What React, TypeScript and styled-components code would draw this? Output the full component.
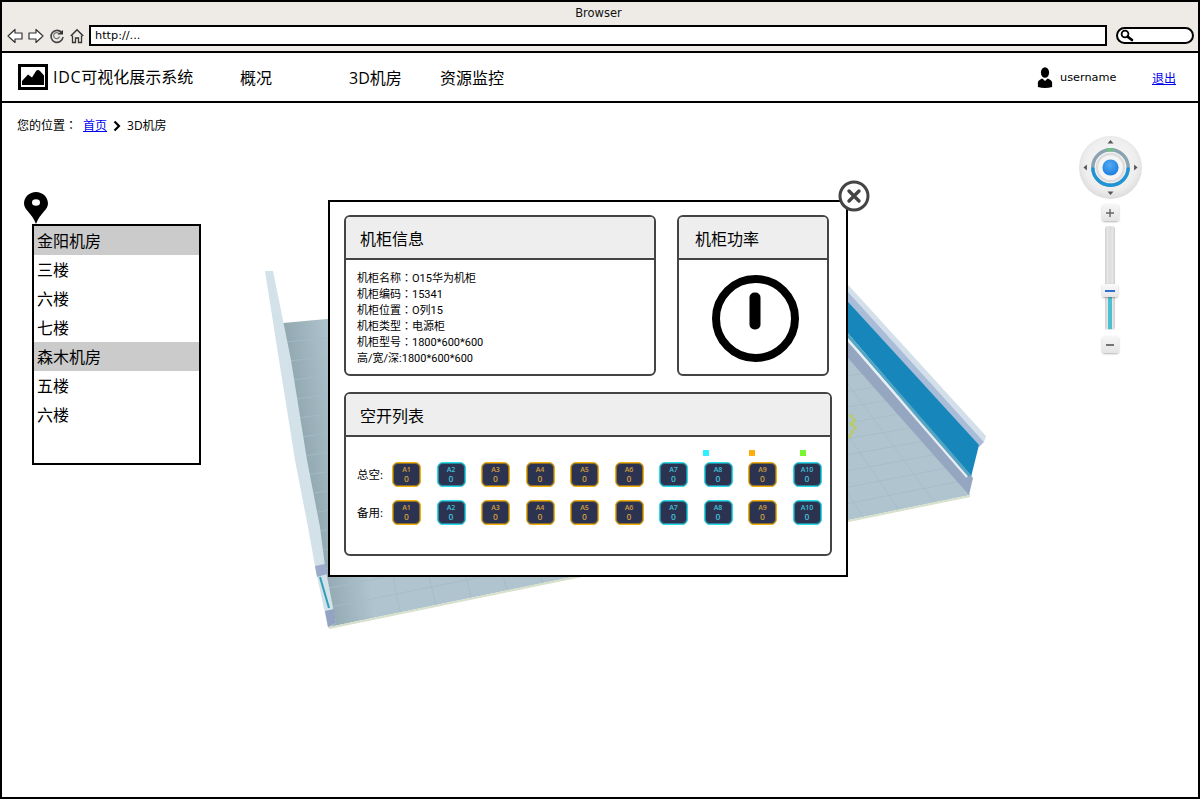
import * as React from 'react';
import styled, { createGlobalStyle } from 'styled-components';

const SANS = '"Open Sans", "Noto Sans CJK SC", sans-serif';
const DEJAVU = '"DejaVu Sans", "Noto Sans CJK SC", sans-serif';

const GlobalStyle = createGlobalStyle`
  html, body {
    margin: 0;
    padding: 0;
    background: #fff;
  }
  body {
    font-family: ${SANS};
    color: #000;
    overflow: hidden;
  }
  * {
    box-sizing: border-box;
  }
`;

const Frame = styled.div`
  width: 1200px;
  height: 799px;
  border: 2px solid #000;
  display: flex;
  flex-direction: column;
  overflow: hidden;
`;

const Chrome = styled.div`
  height: 51px;
  flex: none;
  background: #eeebe6;
  border-bottom: 2px solid #000;
  display: flex;
  flex-direction: column;
`;

const WindowTitle = styled.div`
  height: 22px;
  padding: 3px 3px 0 0;
  text-align: center;
  font: 11.5px/16px ${DEJAVU};
  color: #111;
`;

const ToolRow = styled.div`
  display: flex;
  align-items: center;
  height: 23px;
  padding-left: 5px;
`;

const ToolIcon = styled.svg`
  flex: none;
  display: block;
  margin-right: 5px;
`;

const AddressBar = styled.div`
  width: 1018px;
  height: 21px;
  border: 2px solid #000;
  background: #fff;
  padding-left: 4px;
  font: 11.3px/18px ${DEJAVU};
`;

const SearchBox = styled.div`
  width: 78px;
  height: 17px;
  margin-left: 9px;
  border: 2px solid #000;
  border-radius: 9px;
  background: #fff;
  display: flex;
  align-items: center;
  padding-left: 2px;
`;

const NavBar = styled.div`
  height: 50px;
  flex: none;
  border-bottom: 2px solid #000;
  display: flex;
  align-items: center;
  padding: 0 22px 0 16px;
`;

const Logo = styled.div`
  width: 30px;
  height: 26px;
  border: 3px solid #000;
  display: flex;
  align-items: center;
  justify-content: center;
`;

const Brand = styled.div`
  margin-left: 5px;
  width: 187px;
  font-size: 16px;
  line-height: 24px;
`;

const BrandLatin = styled.span`
  letter-spacing: 0.7px;
`;

const NavItem = styled.div<{ $width: number }>`
  width: ${(p) => p.$width}px;
  padding-top: 2px;
  font-size: 16px;
  line-height: 24px;
`;

const Spacer = styled.div`
  flex: 1;
`;

const UserName = styled.span`
  margin-left: 7px;
  width: 92px;
  padding-top: 2px;
  font: 11.3px/16px ${DEJAVU};
`;

const TextLink = styled.a`
  color: #00e;
  text-decoration: underline;
  cursor: pointer;
`;

const LogoutLink = styled(TextLink)`
  margin-top: 2px;
  font-size: 12px;
`;

const Stage = styled.div`
  position: relative;
  flex: 1;
`;

const Scene = styled.svg`
  position: absolute;
  left: 0;
  top: 0;
`;

const Crumbs = styled.div`
  position: relative;
  display: flex;
  align-items: center;
  padding: 15px 0 0 15px;
  font-size: 12px;
  line-height: 16px;
`;

// centred full-width colon, as the reference font draws it
const Colon = styled.span`
  font-family: "Noto Sans CJK TC", sans-serif;
  line-height: 0;
`;

const CrumbLink = styled(TextLink)`
  margin-left: 6px;
`;

const CrumbArrow = styled.svg`
  margin: 0 6px;
`;

const PinIcon = styled.svg`
  position: absolute;
  left: 22px;
  top: 89px;
`;

const RoomList = styled.div`
  position: absolute;
  left: 30px;
  top: 121px;
  width: 169px;
  height: 241px;
  border: 2px solid #000;
  background: #fff;
`;

const RoomRow = styled.div<{ $group?: boolean }>`
  height: 29px;
  padding-left: 3px;
  font-size: 16px;
  line-height: 30px;
  background: ${(p) => (p.$group ? '#cbcbcb' : 'transparent')};
`;

const Modal = styled.div`
  position: absolute;
  left: 326px;
  top: 97px;
  width: 520px;
  height: 377px;
  border: 2px solid #000;
  background: #fff;
  padding: 13px 14px;
  display: flex;
  flex-direction: column;
  gap: 16px;
`;

const CloseIcon = styled.svg`
  position: absolute;
  right: -24px;
  top: -22px;
`;

const CardRow = styled.div`
  display: flex;
  gap: 21px;
`;

const Card = styled.div<{ $width: number; $height: number }>`
  width: ${(p) => p.$width}px;
  height: ${(p) => p.$height}px;
  border: 2px solid #444;
  border-radius: 6px;
  overflow: hidden;
  display: flex;
  flex-direction: column;
`;

const CardTitle = styled.div<{ $indent?: number }>`
  height: 43px;
  flex: none;
  background: #eee;
  border-bottom: 2px solid #444;
  padding-left: ${(p) => p.$indent ?? 14}px;
  font-size: 16px;
  line-height: 45px;
`;

const InfoBody = styled.div`
  padding: 11px 0 0 11px;
  font-family: Roboto, "Noto Sans CJK SC", sans-serif;
  font-size: 11px;
  line-height: 16px;
`;

const PowerBody = styled.div`
  flex: 1;
  display: flex;
  align-items: center;
  justify-content: center;
  padding: 3px 0 0 5px;
`;

const SwitchGrid = styled.div`
  display: grid;
  grid-template-columns: 19.5px repeat(10, 29px);
  grid-auto-rows: 25px;
  column-gap: 15.5px;
  row-gap: 13px;
  padding: 25px 0 0 11px;
`;

const SwitchLabel = styled.div`
  white-space: nowrap;
  font-size: 11.5px;
  line-height: 26px;
`;

const SwitchCell = styled.div`
  position: relative;
`;

const SwitchButton = styled.div<{ $tone: string }>`
  width: 29px;
  height: 25px;
  border: 1px solid ${(p) => (p.$tone === 'amber' ? '#f2b009' : '#27dceb')};
  box-shadow: inset 0 0 0 1px ${(p) => (p.$tone === 'amber' ? 'rgba(242, 176, 9, 0.5)' : 'rgba(39, 220, 235, 0.5)')};
  border-radius: 6px;
  background: #2b3350;
  color: ${(p) => (p.$tone === 'amber' ? '#d09c3e' : '#42c0da')};
  text-align: center;
  font-family: "Open Sans", sans-serif;
  padding-top: 3px;
`;

const SwitchName = styled.div`
  font-size: 7px;
  font-weight: 600;
  line-height: 8px;
`;

const SwitchValue = styled.div`
  font-size: 8.5px;
  font-weight: 600;
  line-height: 10px;
`;

const StatusDot = styled.div<{ $color: string; $left: number }>`
  position: absolute;
  top: -12px;
  left: ${(p) => p.$left}px;
  width: 6px;
  height: 6px;
  background: ${(p) => p.$color};
`;

const ZoomControl = styled.div`
  position: absolute;
  left: 1076px;
  top: 33px;
  width: 64px;
  display: flex;
  flex-direction: column;
  align-items: center;
`;

const ZoomButton = styled.div`
  width: 17px;
  height: 17px;
  margin-top: 5px;
  border-radius: 3px;
  background: linear-gradient(#f6f6f6, #e4e4e4);
  box-shadow: 0 1px 2px rgba(0, 0, 0, 0.3);
  display: flex;
  align-items: center;
  justify-content: center;
`;

const ZoomTrack = styled.div`
  position: relative;
  width: 10px;
  height: 104px;
  margin: 5px 0 1px;
  border-radius: 3px;
  background: linear-gradient(90deg, #cfcfcf, #e6e6e6 25%, #dcdcdc 50%, #e6e6e6 75%, #cfcfcf);
`;

const ZoomFill = styled.div`
  position: absolute;
  left: 3px;
  right: 3px;
  top: 70px;
  bottom: 1px;
  background: #4cbfd0;
`;

const ZoomThumb = styled.div`
  position: absolute;
  left: -3px;
  top: 58px;
  width: 16px;
  height: 13px;
  border-radius: 2px;
  background: linear-gradient(#fafafa, #e6e6e6);
  box-shadow: 0 1px 2px rgba(0, 0, 0, 0.3);
  display: flex;
  align-items: center;
  justify-content: center;

  &::after {
    content: '';
    width: 10px;
    height: 2px;
    background: #2f6fd0;
  }
`;

const BackIcon = () => (
  <ToolIcon width="16" height="16" viewBox="0 0 16 16">
    <path d="M1 8 L8 1.5 V5 H15 V11 H8 V14.5 Z" fill="#fff" stroke="#333" strokeWidth="1.2" strokeLinejoin="round" />
  </ToolIcon>
);

const ForwardIcon = () => (
  <ToolIcon width="16" height="16" viewBox="0 0 16 16">
    <path d="M15 8 L8 1.5 V5 H1 V11 H8 V14.5 Z" fill="#fff" stroke="#333" strokeWidth="1.2" strokeLinejoin="round" />
  </ToolIcon>
);

const ReloadIcon = () => (
  <ToolIcon width="16" height="16" viewBox="0 0 16 16">
    <path d="M13 5 A6 6 0 1 0 14 9" fill="none" stroke="#444" strokeWidth="1.6" />
    <path d="M10.5 8.5 A3 3 0 1 1 10 5.8" fill="none" stroke="#777" strokeWidth="1.2" />
    <path d="M8.5 6.5 H14 V2 Z" fill="#333" />
  </ToolIcon>
);

const HomeIcon = () => (
  <ToolIcon width="14" height="16" viewBox="0 0 14 16">
    <path d="M0.8 8 L7 1.8 L13.2 8" fill="none" stroke="#333" strokeWidth="1.5" />
    <path d="M2.5 7.5 V14.5 H5.5 V10 H8.5 V14.5 H11.5 V7.5" fill="none" stroke="#333" strokeWidth="1.3" />
  </ToolIcon>
);

const SearchIcon = () => (
  <svg width="14" height="13" viewBox="0 0 14 13">
    <circle cx="5" cy="5" r="3.4" fill="#fff" stroke="#000" strokeWidth="1.8" />
    <path d="M7.6 7.6 L12 11" stroke="#000" strokeWidth="2.6" strokeLinecap="round" />
  </svg>
);

const MountainIcon = () => (
  <svg width="22" height="16" viewBox="0 0 22 16">
    <path d="M0 16 V12 L6 5.5 L10 8.5 L14 2 Q16 0 18 2 L22 6.5 V16 Z" fill="#000" />
  </svg>
);

const UserIcon = () => (
  <svg width="16" height="21" viewBox="0 0 18 21" preserveAspectRatio="none">
    <ellipse cx="9" cy="5.5" rx="4.6" ry="5.3" fill="#000" />
    <path d="M1 20 V15.5 C1 13.5 3.5 12.5 6 11.5 L9 14 L12 11.5 C14.5 12.5 17 13.5 17 15.5 V20 C12 21.2 6 21.2 1 20 Z" fill="#000" />
  </svg>
);

const PIN_PATH = 'M12 0 C5.4 0 0 5 0 11.5 C0 18 8 21 12 32 C16 21 24 18 24 11.5 C24 5 18.6 0 12 0 Z';

const Pin = () => (
  <PinIcon width="24" height="32" viewBox="0 0 24 32">
    <path d={PIN_PATH} fill="#000" />
    <ellipse cx="12" cy="10.5" rx="4" ry="3.2" fill="#fff" />
  </PinIcon>
);

const Close = () => (
  <CloseIcon width="32" height="32" viewBox="0 0 32 32">
    <circle cx="16" cy="16" r="14" fill="#fff" stroke="#444" strokeWidth="3" />
    <path d="M11 11 L21 21 M21 11 L11 21" stroke="#444" strokeWidth="3.4" strokeLinecap="round" />
  </CloseIcon>
);

const PowerIcon = () => (
  <svg width="88" height="88" viewBox="0 0 88 88">
    <circle cx="43.5" cy="43.5" r="39.5" fill="none" stroke="#000" strokeWidth="8" />
    <rect x="37.5" y="17.5" width="11" height="37" rx="5" fill="#000" />
  </svg>
);

const PanDial = () => (
  <svg width="63" height="63" viewBox="0 0 64 64">
    <defs>
      <radialGradient id="dialBase" cx="50%" cy="45%" r="55%">
        <stop offset="0%" stopColor="#fafafa" />
        <stop offset="75%" stopColor="#eeeeee" />
        <stop offset="100%" stopColor="#dcdcdc" />
      </radialGradient>
      <radialGradient id="dialKnob" cx="45%" cy="35%" r="65%">
        <stop offset="0%" stopColor="#53a9f5" />
        <stop offset="100%" stopColor="#1c7fdc" />
      </radialGradient>
    </defs>
    <circle cx="32" cy="32" r="32" fill="url(#dialBase)" />
    <circle cx="32" cy="32" r="18" fill="none" stroke="#8ba3b0" strokeWidth="3.4" />
    <path d="M14 32 A18 18 0 0 0 50 32" fill="none" stroke="#1f94d6" strokeWidth="3.4" />
    <path d="M28 14.4 A18 18 0 0 1 35 14.2" fill="none" stroke="#6fbf86" strokeWidth="3.4" />
    <circle cx="32" cy="32" r="15" fill="#dddddd" />
    <circle cx="32" cy="32" r="12.5" fill="#f5f5f5" />
    <circle cx="32" cy="32" r="8.2" fill="url(#dialKnob)" />
    <path d="M32 4 L35 7.5 H29 Z M32 60 L35 56.5 H29 Z" fill="#555" />
    <path d="M4.5 32 L8 29 V35 Z M59.5 32 L56 29 V35 Z" fill="#555" />
  </svg>
);

// floor corners, in page coordinates: back left, back right, front right, front left
const FLOOR: [number, number][] = [[283, 323], [800, 276], [970, 495], [329, 627]];

const floorPoint = (u: number, v: number) => {
  const [a, b, c, d] = FLOOR;
  const topX = a[0] + (b[0] - a[0]) * u;
  const topY = a[1] + (b[1] - a[1]) * u;
  const lowX = d[0] + (c[0] - d[0]) * u;
  const lowY = d[1] + (c[1] - d[1]) * u;
  return `${(topX + (lowX - topX) * v).toFixed(1)} ${(topY + (lowY - topY) * v).toFixed(1)}`;
};

const gridLines = () => {
  const parts: string[] = [];
  for (let i = 1; i < 18; i++) {
    parts.push(`M${floorPoint(i / 18, 0)} L${floorPoint(i / 18, 1)}`);
  }
  for (let i = 1; i < 16; i++) {
    parts.push(`M${floorPoint(0, i / 16)} L${floorPoint(1, i / 16)}`);
  }
  return parts.join(' ');
};

const Room3D = () => (
  <Scene width="1196" height="694" viewBox="2 103 1196 694">
    <defs>
      <linearGradient id="floorShade" x1="285" y1="330" x2="330" y2="323" gradientUnits="userSpaceOnUse">
        <stop offset="0%" stopColor="#93a9b2" />
        <stop offset="100%" stopColor="#afc4ce" />
      </linearGradient>
    </defs>
    <polygon points={FLOOR.map((p) => p.join(',')).join(' ')} fill="url(#floorShade)" />
    <path d={gridLines()} fill="none" stroke="#a5bbc7" strokeWidth="0.8" />
    <path d="M329 628 L970 496" stroke="#d6e0cb" strokeWidth="2" />
    <polygon
      points="265,271 279,360 295,460 308,527 315,566 328,628 336,623 325,566 320,527 307,460 291,360 273,271"
      fill="#d3e1e9"
    />
    <polygon points="315,566 325,564 327,574 317,577" fill="#9cabca" />
    <path d="M320 577 L329 608" stroke="#2f9fb8" strokeWidth="2" />
    <polygon points="325,611 334,609 336,623 328,627" fill="#93a3c2" />
    <polygon points="840,276 986,436 984,442 840,283" fill="#d3e0ea" />
    <polygon points="840,283 984,442 979,447 840,293" fill="#a9bcd8" />
    <polygon points="840,293 979,445 971,477 840,324" fill="#1786ba" />
    <polygon points="840,333 973,478 969,495 840,349" fill="#94a6c0" />
    <path d="M840 326.5 L970 476" stroke="#52a6c4" strokeWidth="3" />
    <path d="M840 331 L967 477" stroke="#e9eff4" strokeWidth="2" />
    <g fill="#b7cb6e">
      <circle cx="851" cy="416" r="2" />
      <circle cx="854" cy="420" r="2" />
      <circle cx="852" cy="424" r="2.5" />
      <circle cx="855" cy="428" r="2" />
      <circle cx="852" cy="432" r="2" />
      <circle cx="850" cy="436" r="2" />
    </g>
  </Scene>
);

const ROOMS = [
  { name: '金阳机房', group: true },
  { name: '三楼' },
  { name: '六楼' },
  { name: '七楼' },
  { name: '森木机房', group: true },
  { name: '五楼' },
  { name: '六楼' },
];

const INFO = [
  ['机柜名称', 'O15华为机柜'],
  ['机柜编码', '15341'],
  ['机柜位置', 'O列15'],
  ['机柜类型', '电源柜'],
  ['机柜型号', '1800*600*600'],
];

const TONES = ['amber', 'cyan', 'amber', 'amber', 'amber', 'amber', 'cyan', 'cyan', 'amber', 'cyan'];

const DOTS: Record<number, { color: string; left: number }> = {
  7: { color: '#2ff0ff', left: -1 },
  8: { color: '#ffae0a', left: 1 },
  9: { color: '#79f72e', left: 7 },
};

const SwitchRow: React.FC<SwitchRowProps> = ({ label, withDots }) => (
  <>
    <SwitchLabel>{label}</SwitchLabel>
    {TONES.map((tone, i) => (
      <SwitchCell key={i}>
        {withDots && DOTS[i] && <StatusDot $color={DOTS[i].color} $left={DOTS[i].left} />}
        <SwitchButton $tone={tone}>
          <SwitchName>A{i + 1}</SwitchName>
          <SwitchValue>0</SwitchValue>
        </SwitchButton>
      </SwitchCell>
    ))}
  </>
);

interface SwitchRowProps {
  label: string,
  withDots?: boolean,
}

const App: React.FC = () => {
  return (
    <Frame>
      <GlobalStyle />
      <Chrome>
        <WindowTitle>Browser</WindowTitle>
        <ToolRow>
          <BackIcon />
          <ForwardIcon />
          <ReloadIcon />
          <HomeIcon />
          <AddressBar>http://...</AddressBar>
          <SearchBox><SearchIcon /></SearchBox>
        </ToolRow>
      </Chrome>
      <NavBar>
        <Logo><MountainIcon /></Logo>
        <Brand><BrandLatin>IDC</BrandLatin>可视化展示系统</Brand>
        <NavItem $width={109}>概况</NavItem>
        <NavItem $width={91}>3D机房</NavItem>
        <NavItem $width={70}>资源监控</NavItem>
        <Spacer />
        <UserIcon />
        <UserName>username</UserName>
        <LogoutLink>退出</LogoutLink>
      </NavBar>
      <Stage>
        <Room3D />
        <Crumbs>
          <span>您的位置<Colon>：</Colon></span>
          <CrumbLink>首页</CrumbLink>
          <CrumbArrow width="8" height="12" viewBox="0 0 8 12">
            <path d="M1.5 1.5 L6 6 L1.5 10.5" fill="none" stroke="#000" strokeWidth="2.2" />
          </CrumbArrow>
          <span>3D机房</span>
        </Crumbs>
        <Pin />
        <RoomList>
          {ROOMS.map((room, i) => (
            <RoomRow key={i} $group={room.group}>{room.name}</RoomRow>
          ))}
        </RoomList>
        <ZoomControl>
          <PanDial />
          <ZoomButton>
            <svg width="10" height="10" viewBox="0 0 10 10">
              <path d="M1 5 H9 M5 1 V9" stroke="#666" strokeWidth="1.4" />
            </svg>
          </ZoomButton>
          <ZoomTrack>
            <ZoomFill />
            <ZoomThumb />
          </ZoomTrack>
          <ZoomButton>
            <svg width="10" height="10" viewBox="0 0 10 10">
              <path d="M1 5 H9" stroke="#666" strokeWidth="1.8" />
            </svg>
          </ZoomButton>
        </ZoomControl>
        <Modal>
          <Close />
          <CardRow>
            <Card $width={312} $height={161}>
              <CardTitle>机柜信息</CardTitle>
              <InfoBody>
                {INFO.map(([name, value]) => (
                  <div key={name}>{name}<Colon>：</Colon>{value}</div>
                ))}
                <div>高/宽/深:1800*600*600</div>
              </InfoBody>
            </Card>
            <Card $width={152} $height={161}>
              <CardTitle $indent={16}>机柜功率</CardTitle>
              <PowerBody><PowerIcon /></PowerBody>
            </Card>
          </CardRow>
          <Card $width={488} $height={164}>
            <CardTitle>空开列表</CardTitle>
            <SwitchGrid>
              <SwitchRow label="总空:" withDots />
              <SwitchRow label="备用:" />
            </SwitchGrid>
          </Card>
        </Modal>
      </Stage>
    </Frame>
  );
};

export default App;
